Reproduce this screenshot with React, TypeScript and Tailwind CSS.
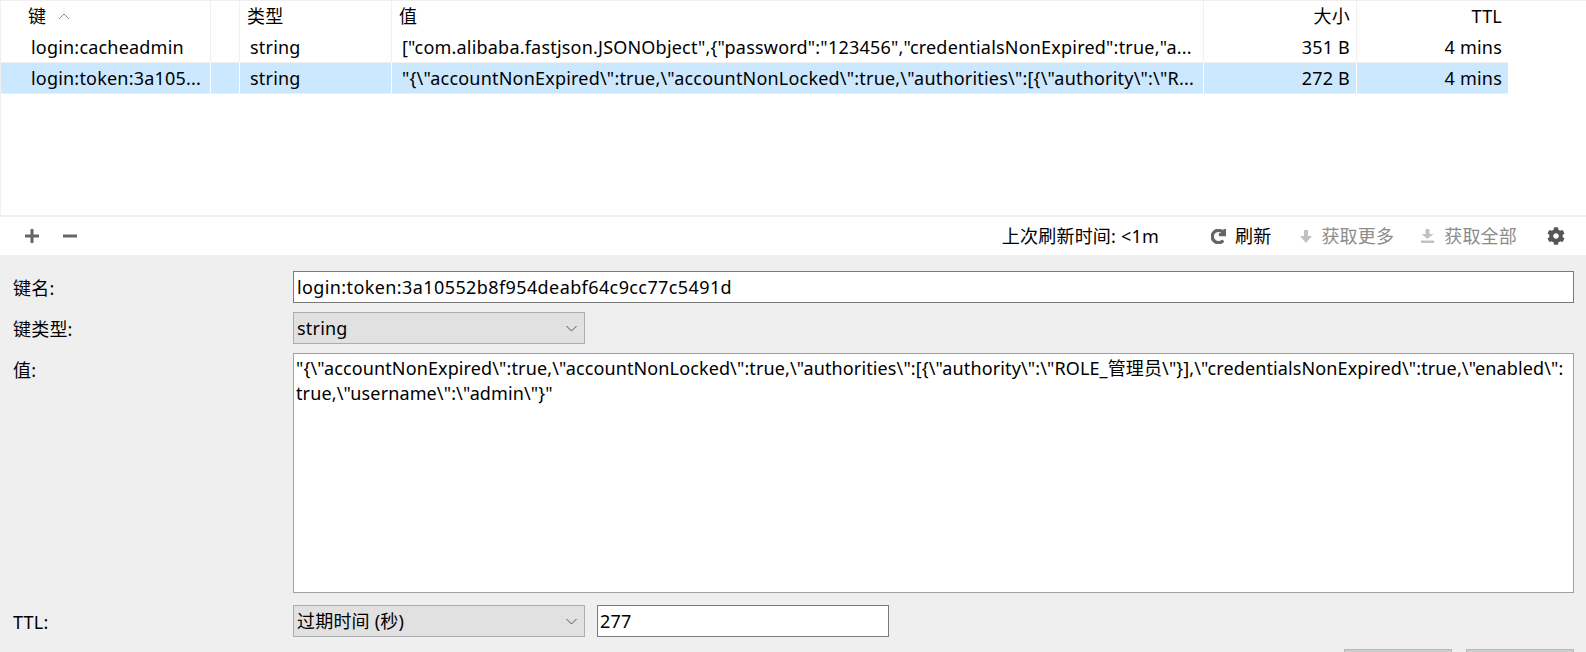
import React from "react";
import { FaCog, FaRedo } from "react-icons/fa";

const fontStack = "font-['Noto_Sans','Noto_Sans_CJK_SC',sans-serif]";

const rows = [
  {
    key: "login:cacheadmin",
    type: "string",
    value:
      '["com.alibaba.fastjson.JSONObject",{"password":"123456","credentialsNonExpired":true,"a...',
    size: "351 B",
    ttl: "4 mins",
    selected: false,
  },
  {
    key: "login:token:3a105...",
    type: "string",
    value:
      '"{\\"accountNonExpired\\":true,\\"accountNonLocked\\":true,\\"authorities\\":[{\\"authority\\":\\"R...',
    size: "272 B",
    ttl: "4 mins",
    selected: true,
  },
];

const Chevron = () => (
  <svg width="11" height="7" viewBox="0 0 11 7" fill="none" stroke="#555" strokeWidth="1">
    <path d="M0.5 1 L5.5 6 L10.5 1" />
  </svg>
);

const PlusIcon = () => (
  <svg width="16" height="16" viewBox="0 0 16 16" fill="#666">
    <path d="M6.5 1 H9.5 V6.5 H15 V9.5 H9.5 V15 H6.5 V9.5 H1 V6.5 H6.5 Z" />
  </svg>
);

const MinusIcon = () => (
  <svg width="16" height="16" viewBox="0 0 16 16" fill="#666">
    <rect x="1" y="6.5" width="14" height="3" />
  </svg>
);

const ArrowIcon = () => (
  <svg width="12" height="13" viewBox="0 0 12 13" fill="#c2c2c2">
    <path d="M4 0 H8 V6 H12 L6 13 L0 6 H4 Z" />
  </svg>
);

const DownloadIcon = () => (
  <svg width="13" height="14" viewBox="0 0 13 14" fill="#c2c2c2" className="block">
    <path d="M4.5 0 H8.5 V5 H12.5 L6.5 10 L0.5 5 H4.5 Z" />
    <rect x="0" y="11.5" width="13" height="2.5" />
  </svg>
);

function Select({ text }: { text: string }) {
  return (
    <div className="flex h-8 w-[292px] items-center justify-between border border-[#adadad] bg-[#e1e1e1] pl-[3px] pr-[7px]">
      <span>{text}</span>
      <Chevron />
    </div>
  );
}

export default function App() {
  return (
    <div className={`flex h-[652px] w-[1586px] flex-col overflow-hidden bg-[#efefef] text-[18px] tracking-[0.2px] text-black ${fontStack}`}>
      <div className="h-[215px] shrink-0 border-l border-t border-[#f0f0f0] bg-white">
        <div className="flex h-[31px] w-[1507px]">
          <div className="flex w-[210px] items-center gap-3 border-r border-[#f0f0f0] pl-[27px]">
            <span>键</span>
            <svg width="12" height="7" viewBox="0 0 12 7" fill="none" stroke="#888" strokeWidth="1">
              <path d="M1 6 L6 1 L11 6" />
            </svg>
          </div>
          <div className="flex w-[29px] border-r border-[#f0f0f0]" />
          <div className="flex w-[152px] items-center border-r border-[#f0f0f0] pl-[7px]">类型</div>
          <div className="flex w-[812px] items-center border-r border-[#f0f0f0] pl-[7px]">值</div>
          <div className="flex w-[153px] items-center justify-end border-r border-[#f0f0f0] pr-[6px]">大小</div>
          <div className="flex w-[151px] items-center justify-end pr-[6px]">TTL</div>
        </div>
        {rows.map((row) => {
          const line = row.selected ? "border-white" : "border-[#f0f0f0]";
          return (
            <div
              key={row.key}
              className={`flex h-[31px] w-[1507px] border-b border-[#f0f0f0] ${row.selected ? "bg-[#cce8ff]" : ""}`}
            >
              <div className={`flex w-[210px] items-center border-r pl-[30px] ${line}`}>{row.key}</div>
              <div className={`w-[29px] border-r ${line}`} />
              <div className={`flex w-[152px] items-center border-r pl-[10px] ${line}`}>{row.type}</div>
              <div className={`flex w-[812px] items-center whitespace-nowrap border-r pl-[10px] ${line}`}>{row.value}</div>
              <div className={`flex w-[153px] items-center justify-end border-r pr-[6px] ${line}`}>{row.size}</div>
              <div className="flex w-[151px] items-center justify-end pr-[6px]">{row.ttl}</div>
            </div>
          );
        })}
      </div>

      <div className="mt-[2px] flex h-[38px] shrink-0 items-center bg-white pl-6 pr-[21px]">
        <PlusIcon />
        <span className="ml-[22px]">
          <MinusIcon />
        </span>
        <span className="ml-auto">上次刷新时间: &lt;1m</span>
        <FaRedo className="ml-[52px] text-[15px] text-[#666]" stroke="currentColor" strokeWidth={40} />
        <span className="ml-[9px]">刷新</span>
        <span className="ml-[29px]">
          <ArrowIcon />
        </span>
        <span className="ml-[9px] text-[#8c8c8c]">获取更多</span>
        <span className="ml-[27px]">
          <DownloadIcon />
        </span>
        <span className="ml-[10px] text-[#8c8c8c]">获取全部</span>
        <FaCog className="ml-[30px] text-[18px] text-[#555]" />
      </div>

      <div className="flex shrink-0 flex-col gap-[9px] pt-4 pl-[13px] pr-3">
        <div className="flex items-center">
          <span className="w-[280px] pt-[2px]">键名:</span>
          <input
            readOnly
            value="login:token:3a10552b8f954deabf64c9cc77c5491d"
            className="h-8 flex-1 border border-[#7a7a7a] bg-white px-[3px] tracking-[0.4px] outline-none"
          />
        </div>
        <div className="flex items-center">
          <span className="w-[280px] pt-[2px]">键类型:</span>
          <Select text="string" />
        </div>
        <div className="flex">
          <span className="w-[280px] pt-1">值:</span>
          <textarea
            readOnly
            value={
              '"{\\"accountNonExpired\\":true,\\"accountNonLocked\\":true,\\"authorities\\":[{\\"authority\\":\\"ROLE_管理员\\"}],\\"credentialsNonExpired\\":true,\\"enabled\\":\ntrue,\\"username\\":\\"admin\\"}"'
            }
            className="h-[240px] flex-1 resize-none overflow-hidden border border-[#a0a0a0] bg-white px-[2px] pt-[2px] leading-[25px] tracking-[0.12px] outline-none"
          />
        </div>
        <div className="mt-[3px] flex items-center">
          <span className="w-[280px] pt-[3px]">TTL:</span>
          <Select text="过期时间 (秒)" />
          <input
            readOnly
            value="277"
            className="ml-3 h-8 w-[292px] border border-[#7a7a7a] bg-white px-[2px] outline-none"
          />
        </div>
        <div className="mt-[3px] flex justify-end gap-[14px]">
          <button className="h-8 w-[108px] border border-[#b5b8b5] bg-[#ccd0cd]" />
          <button className="h-8 w-[108px] border border-[#b5b8b5] bg-[#ccd0cd]" />
        </div>
      </div>
    </div>
  );
}
